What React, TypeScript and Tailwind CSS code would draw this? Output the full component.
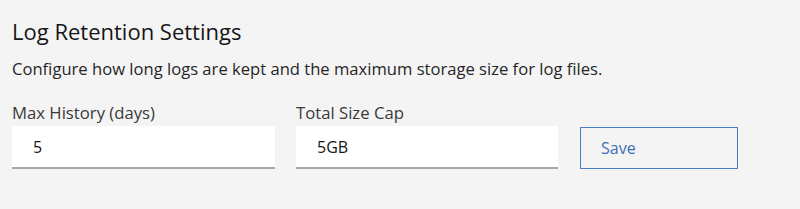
export default function App() {
  return (
    <main className="min-h-[209px] w-full bg-[#f4f4f4] px-3 pt-[17px] text-[#161616] font-['Open_Sans',sans-serif]">
      <h2 className="text-[22px] leading-[28px] font-normal">Log Retention Settings</h2>
      <p className="mt-[14px] text-[16.6px] leading-[20px] text-[#262626]">
        Configure how long logs are kept and the maximum storage size for log files.
      </p>

      <div className="mt-[24px] flex items-end gap-[21px]">
        <label className="flex w-[263px] flex-col gap-[3px]">
          <span className="text-[16.7px] leading-[20px] text-[#393939]">Max History (days)</span>
          <input
            defaultValue="5"
            className="h-[43px] w-full border-b-2 border-[#a8a8a8] bg-white pl-[21px] text-[16px] text-[#161616] outline-none"
          />
        </label>
        <label className="flex w-[262px] flex-col gap-[3px]">
          <span className="text-[16.7px] leading-[20px] text-[#393939]">Total Size Cap</span>
          <input
            defaultValue="5GB"
            className="h-[43px] w-full border-b-2 border-[#a8a8a8] bg-white pl-[21px] text-[16px] text-[#161616] outline-none"
          />
        </label>
        <button className="ml-px h-[42px] w-[158px] border border-[#4a7cc4] pl-5 text-left text-[16px] text-[#3d70b2]">
          Save
        </button>
      </div>
    </main>
  );
}
